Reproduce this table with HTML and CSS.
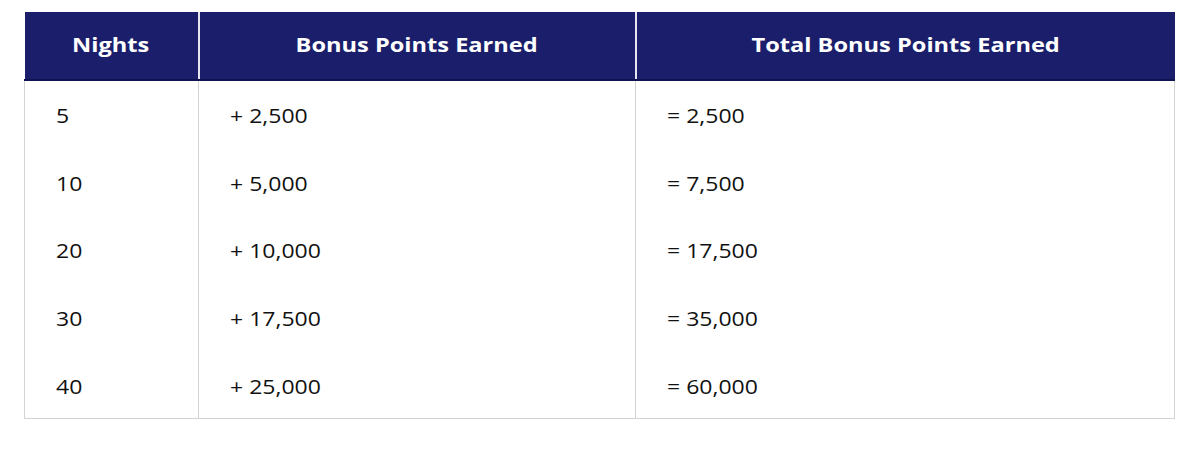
FILE: index.html
```html
<!DOCTYPE html>
<html>
<head>
<meta charset="utf-8">
<link rel="stylesheet" href="styles.css">
</head>
<body>
<div class="wrap">
<table class="points">
  <colgroup>
    <col class="c1"><col class="c2"><col class="c3">
  </colgroup>
  <thead>
    <tr><th><span>Nights</span></th><th><span>Bonus Points Earned</span></th><th><span>Total Bonus Points Earned</span></th></tr>
  </thead>
  <tbody>
    <tr><td><span>5</span></td><td><span>+ 2,500</span></td><td><span>= 2,500</span></td></tr>
    <tr><td><span>10</span></td><td><span>+ 5,000</span></td><td><span>= 7,500</span></td></tr>
    <tr><td><span>20</span></td><td><span>+ 10,000</span></td><td><span>= 17,500</span></td></tr>
    <tr><td><span>30</span></td><td><span>+ 17,500</span></td><td><span>= 35,000</span></td></tr>
    <tr><td><span>40</span></td><td><span>+ 25,000</span></td><td><span>= 60,000</span></td></tr>
  </tbody>
</table>
</div>
</body>
</html>
```
FILE: styles.css
```css
html, body { margin: 0; padding: 0; background: #fff; }
.wrap { padding: 12px 0 0 24px; }
.points {
  width: 1150px;
  border-collapse: collapse;
  table-layout: fixed;
  font-family: "Open Sans", "Noto Sans", sans-serif;
  color: #111;
}
.c1 { width: 174px; }
.c2 { width: 437px; }
.c3 { width: 539px; }
.points span {
  display: inline-block;
  transform: scaleX(1.18);
}
.points th {
  background: #1b1f6b;
  color: #fff;
  font-weight: 700;
  font-size: 20px;
  height: 64px;
  padding: 0 0 3px 0;
  text-align: center;
  border-left: 2px solid #e6e6ee;
  border-bottom: 2px solid #10134f;
  box-sizing: content-box;
}
.points th span { transform-origin: center; }
.points th:first-child { border-left: none; }
.points td {
  font-size: 19.5px;
  font-weight: 500;
  height: 67.8px;
  padding: 3px 0 0 31px;
  text-align: left;
  border-left: 1px solid #d3d3d3;
  border-right: 1px solid #d3d3d3;
  box-sizing: border-box;
}
.points td span { transform-origin: left center; }
.points tbody tr:last-child td { border-bottom: 1px solid #d3d3d3; }
```
